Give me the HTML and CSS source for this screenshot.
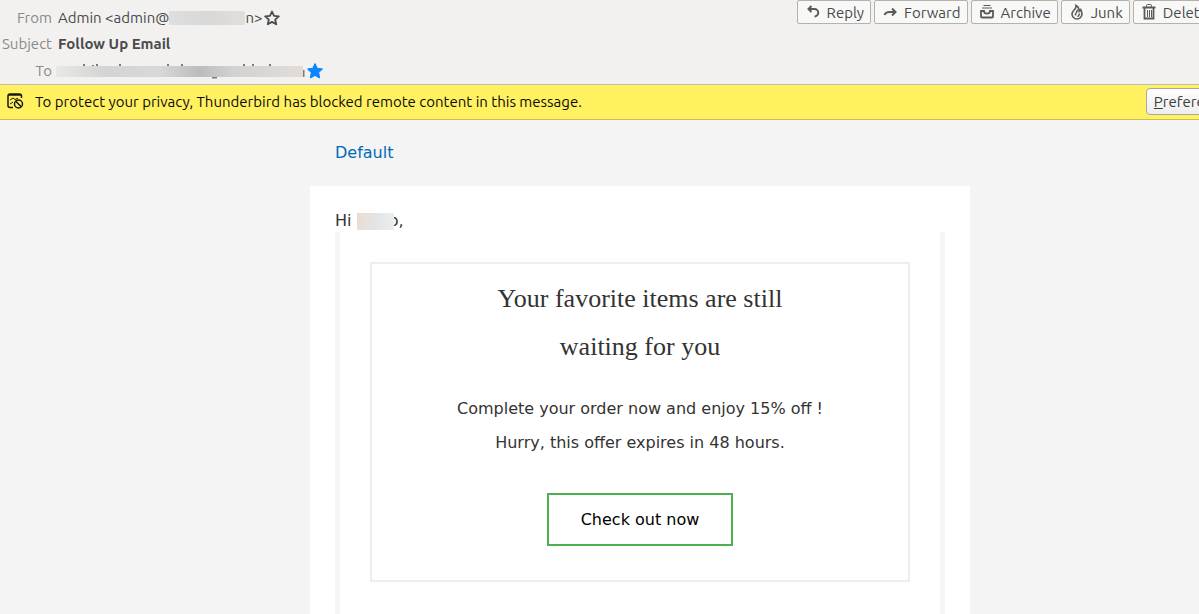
FILE: index.html
```html
<!DOCTYPE html>
<html lang="en">
<head>
    <meta charset="UTF-8">
    <meta name="viewport" content="width=device-width, initial-scale=1.0">
    <title>Follow Up Email</title>
    <link rel="stylesheet" href="styles.css">
</head>
<body>
    <header class="message-header">
        <dl class="fields">
            <dt>From</dt>
            <dd>
                <span>Admin &lt;admin@</span><span class="redacted redacted-from"></span><span>n&gt;</span>
                <svg class="star" viewBox="0 0 16 16"><path d="M8 1.500l2 4.400 4.800.500-3.600 3.200 1 4.700L8 11.900l-4.200 2.400 1-4.700L1.200 6.400 6 5.900z" fill="none" stroke="#4a4a4a" stroke-width="1.800" stroke-linejoin="round"/></svg>
            </dd>
            <dt>Subject</dt>
            <dd class="subject">Follow Up Email</dd>
            <dt>To</dt>
            <dd>
                <svg class="redacted-to" viewBox="0 0 249 16">
                    <defs>
                        <linearGradient id="smear">
                            <stop offset="0" stop-color="#e8e8e6"/>
                            <stop offset=".2" stop-color="#d4d4d4"/>
                            <stop offset=".42" stop-color="#d8d8d8"/>
                            <stop offset=".58" stop-color="#bcbcbc"/>
                            <stop offset=".72" stop-color="#d2d2d2"/>
                            <stop offset="1" stop-color="#e2dcd7"/>
                        </linearGradient>
                    </defs>
                    <path d="M28 1v2M37 2v1M41 1v2M64 1v2M112 1v2M126 1v2M188 1v2M197 1v2M214 1v2M156 14.500h5M247.500 7v7" stroke="#7a7a86" stroke-width="2" fill="none"/>
                    <path d="M0 3h247v11H0z" fill="url(#smear)"/>
                </svg>
                <svg class="star" viewBox="0 0 16 16"><path d="M8 .5l2.300 4.800 5.200.700-3.800 3.600 1 5.400L8 12.500 3.300 15l1-5.400L.5 6l5.200-.7z" fill="#0a84ff" stroke="#0a84ff" stroke-linejoin="round"/></svg>
            </dd>
        </dl>
        <div class="toolbar">
            <button type="button"><svg viewBox="0 0 16 16"><path d="M6.500 2L3.500 5l3 3M4 5h5.500a3.500 3.500 0 0 1 0 7.500"/></svg>Reply</button>
            <button type="button"><svg viewBox="0 0 16 16"><path d="M2.500 11c1-2.500 3-3 5-3H13M10 4.500L13.500 8 10 11.500"/></svg>Forward</button>
            <button type="button"><svg viewBox="0 0 16 16"><path d="M4.500 1.500h7M3 4h10" stroke-width="1"/><path d="M2 7h3c0 3.500 6 3.500 6 0h3v5.500a1 1 0 0 1-1 1H3a1 1 0 0 1-1-1z" stroke-width="1.800"/></svg>Archive</button>
            <button type="button"><svg viewBox="0 0 16 16"><path d="M7 1.500c1 3.500-4 4.500-4 8.500a5 5 0 0 0 10 0c0-2-1-3-1.300-4.500-.8.500-.9 1.500-1.500 2C10.200 5 9 2.500 7 1.500z" stroke-width="1.600"/><path d="M8.500 5.500c0 2.500-2.500 3-2 6M10.500 9.500c0 1.500-1.500 2-1.500 3.500" stroke-width="1.500"/></svg>Junk</button>
            <button type="button"><svg viewBox="0 0 16 16"><path d="M1.500 3.500h13M3.500 4v10.500h9V4" stroke-width="1.800"/><path d="M5.500 3V1.500a1 1 0 0 1 1-1h3a1 1 0 0 1 1 1V3M6.500 6v7M8.500 6v7M10.500 6v7" stroke-width="1"/></svg>Delete</button>
        </div>
    </header>

    <div class="notice">
        <svg class="notice-icon" viewBox="0 0 18 18"><path d="M7 15.500H4A2 2 0 0 1 2 13.500V4a2 2 0 0 1 2-2h9.500a2 2 0 0 1 2 2v2M2 3h13"/><path d="M4 8l3-2 2 1.500L12 6M4 12l3-2" stroke-width="1"/><circle cx="12.500" cy="12" r="4"/><path d="M9.800 9.300l5.400 5.400"/></svg>
        <span>To protect your privacy, Thunderbird has blocked remote content in this message.</span>
        <button type="button" class="preferences"><u>P</u>references</button>
    </div>

    <main class="viewer">
        <div class="email">
            <a class="brand" href="#">Default</a>
            <div class="sheet">
                <p class="greeting">Hi <span class="redacted redacted-name"></span><span class="clipped"><span>o</span></span>,</p>
                <div class="frame">
                    <div class="offer">
                        <h1>Your favorite items are still waiting for you</h1>
                        <p>Complete your order now and enjoy 15% off !<br>Hurry, this offer expires in 48 hours.</p>
                        <a class="checkout" href="#">Check out now</a>
                    </div>
                </div>
            </div>
        </div>
    </main>
</body>
</html>
```

FILE: styles.css
```css
* {
    box-sizing: border-box;
}

body {
    margin: 0;
    min-height: 100vh;
    overflow: hidden;
    display: flex;
    flex-direction: column;
    font-family: Ubuntu, "Noto Sans", sans-serif;
    font-size: 15px;
    color: #4a4a4a;
    background-color: #f4f4f4;
}

.message-header {
    display: flex;
    justify-content: space-between;
    align-items: flex-start;
    height: 85px;
    background-color: #f2f1f0;
    border-bottom: 1px solid #bfbdba;
}

.fields {
    display: grid;
    grid-template-columns: 52px auto;
    grid-template-rows: 20px 20px 22px;
    column-gap: 6px;
    row-gap: 6px;
    align-items: center;
    margin: 8px 0 0;
    line-height: 20px;
}

.fields dt {
    text-align: right;
    color: #8a8a88;
}

.fields dd {
    display: flex;
    align-items: center;
    margin: 0;
}

.fields .subject {
    font-weight: bold;
}

.star {
    width: 16px;
    height: 16px;
    margin-left: 2px;
}

.redacted {
    display: inline-block;
    height: 14px;
}

.redacted-from {
    width: 76px;
    background: linear-gradient(to right, #dedede, #d8d8d8 50%, #e2deda);
}

.redacted-to {
    width: 249px;
    height: 16px;
    margin-left: -2px;
}

.toolbar {
    display: flex;
    gap: 3px;
    margin-right: -16px;
}

.toolbar button {
    display: flex;
    align-items: center;
    gap: 6px;
    height: 24px;
    padding: 0 6px 0 7px;
    font: inherit;
    color: #4a4a4a;
    background-color: #f8f8f7;
    border: 1px solid #b4b2af;
    border-radius: 2px;
}

.toolbar svg {
    width: 16px;
    height: 16px;
    fill: none;
    stroke: #5a5a5a;
    stroke-width: 2;
}

.notice {
    display: flex;
    align-items: center;
    height: 35px;
    padding: 0 0 2px 6px;
    color: #0c0c0d;
    background-color: #fff15f;
    border-bottom: 1px solid #c8bd58;
}

.notice-icon {
    width: 18px;
    height: 18px;
    margin-right: 11px;
    fill: none;
    stroke: #1a1a10;
    stroke-width: 1.5;
}

.preferences {
    height: 27px;
    margin-left: auto;
    margin-right: -44px;
    padding: 0 7px;
    font: inherit;
    color: #3c3c3c;
    background-image: linear-gradient(#ffffff, #ededed);
    border: 1px solid #aaa8a0;
    border-radius: 4px;
}

.viewer {
    flex: 1;
    display: flex;
    justify-content: center;
    padding-left: 81px;
}

.email {
    display: flex;
    flex-direction: column;
    width: 100%;
    max-width: 660px;
    padding-top: 20px;
    font-family: "DejaVu Sans", sans-serif;
    font-size: 16px;
    color: #333333;
}

.brand {
    margin: 0 25px 20px;
    line-height: 26px;
    color: #006bb4;
    text-decoration: none;
}

.sheet {
    flex: 1;
    display: flex;
    flex-direction: column;
    padding: 24px 25px 0;
    background-color: #ffffff;
}

.greeting {
    display: flex;
    align-items: center;
    margin: 0;
    line-height: 22px;
    white-space: pre;
}

.redacted-name {
    width: 37px;
    height: 17px;
    background: linear-gradient(to right, #ecdcd2, #e4e4e4 50%, #ebeeef);
}

.clipped {
    display: flex;
    justify-content: flex-end;
    width: 5px;
    overflow: hidden;
}

.frame {
    flex: 1;
    padding: 30px 30px 0;
    border-left: 5px solid #f5f5f5;
    border-right: 5px solid #f5f5f5;
}

.offer {
    padding: 11px 100px 34px;
    text-align: center;
    border: 2px solid #eeeeee;
}

.offer h1 {
    margin: 0 0 21px;
    font-family: "Liberation Serif", serif;
    font-size: 26px;
    font-weight: normal;
    line-height: 48px;
}

.offer p {
    margin: 0 -20px 33px;
    line-height: 34px;
}

.checkout {
    display: inline-block;
    padding: 14px 32px;
    line-height: 21px;
    color: #000000;
    text-decoration: none;
    border: 2px solid #4caf50;
}
```
